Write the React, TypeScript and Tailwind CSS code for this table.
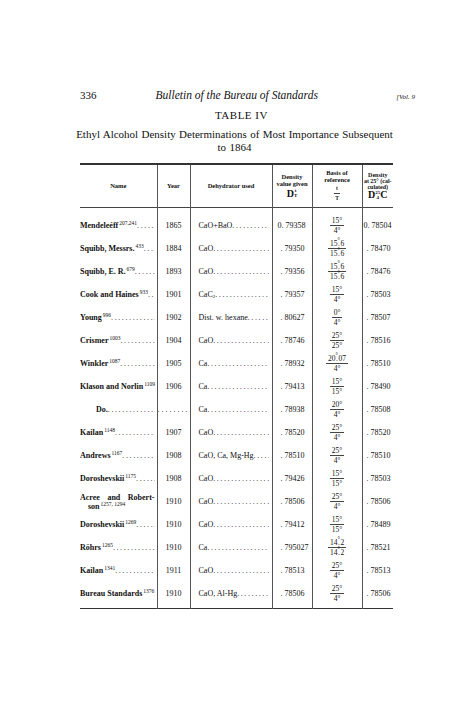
import React from "react";

type Row = {
  name: React.ReactNode;
  year: string;
  dehy: React.ReactNode;
  given: string;
  basis: [React.ReactNode, React.ReactNode];
  d25: string;
};

const DOTS = ". . . . . . . . . . . . . . . . . . . . . . . . . . . . . . . . . . . . . . . .";

const Sup = ({ children }: { children: React.ReactNode }) => (
  <sup className="ml-[1px] text-[5.5px] font-normal">{children}</sup>
);

// 15°.6 style: degree sign sitting over the decimal point
const Dd = ({ a, b }: { a: string; b: string }) => (
  <span>
    {a}
    <span className="relative inline-block w-[3px]">
      <span className="absolute -top-[3px] left-0 text-[6px]">°</span>.
    </span>
    {b}
  </span>
);

const Leader = ({ children, bold }: { children: React.ReactNode; bold?: boolean }) => (
  <span className={`flex w-full items-baseline ${bold ? "font-bold" : ""}`}>
    <span className="shrink-0 whitespace-nowrap">{children}</span>
    <span className="flex-1 overflow-hidden whitespace-nowrap font-normal tracking-[-0.2px]">{DOTS}</span>
  </span>
);

const Frac = ({ top, bottom }: { top: React.ReactNode; bottom: React.ReactNode }) => (
  <span className="inline-flex flex-col items-center leading-[9px]">
    <span className="border-b border-[#444] px-[2px]">{top}</span>
    <span className="px-[2px]">{bottom}</span>
  </span>
);

const rows: Row[] = [
  { name: <>Mendeleéff<Sup>207,241</Sup></>, year: "1865", dehy: "CaO+BaO", given: "0. 79358", basis: ["15°", "4°"], d25: "0. 78504" },
  { name: <>Squibb, Messrs.<Sup>433</Sup></>, year: "1884", dehy: "CaO", given: ". 79350", basis: [<Dd a="15" b="6" />, <Dd a="15" b="6" />], d25: ". 78470" },
  { name: <>Squibb, E. R.<Sup>679</Sup></>, year: "1893", dehy: "CaO", given: ". 79356", basis: [<Dd a="15" b="6" />, <Dd a="15" b="6" />], d25: ". 78476" },
  { name: <>Cook and Haines<Sup>933</Sup></>, year: "1901", dehy: <>CaC<sub className="text-[5px]">2</sub></>, given: ". 79357", basis: ["15°", "4°"], d25: ". 78503" },
  { name: <>Young<Sup>996</Sup></>, year: "1902", dehy: "Dist. w. hexane", given: ". 80627", basis: ["0°", "4°"], d25: ". 78507" },
  { name: <>Crismer<Sup>1003</Sup></>, year: "1904", dehy: "CaO", given: ". 78746", basis: ["25°", "25°"], d25: ". 78516" },
  { name: <>Winkler<Sup>1087</Sup></>, year: "1905", dehy: "Ca", given: ". 78932", basis: [<Dd a="20" b="07" />, "4°"], d25: ". 78510" },
  { name: <>Klason and Norlin<Sup>1109</Sup></>, year: "1906", dehy: "Ca", given: ". 79413", basis: ["15°", "15°"], d25: ". 78490" },
  { name: "DO", year: "", dehy: "Ca", given: ". 78938", basis: ["20°", "4°"], d25: ". 78508" },
  { name: <>Kailan<Sup>1148</Sup></>, year: "1907", dehy: "CaO", given: ". 78520", basis: ["25°", "4°"], d25: ". 78520" },
  { name: <>Andrews<Sup>1167</Sup></>, year: "1908", dehy: "CaO, Ca, Mg-Hg", given: ". 78510", basis: ["25°", "4°"], d25: ". 78510" },
  { name: <>Doroshevskii<Sup>1175</Sup></>, year: "1908", dehy: "CaO", given: ". 79426", basis: ["15°", "15°"], d25: ". 78503" },
  { name: "ACREE", year: "1910", dehy: "CaO", given: ". 78506", basis: ["25°", "4°"], d25: ". 78506" },
  { name: <>Doroshevskii<Sup>1269</Sup></>, year: "1910", dehy: "CaO", given: ". 79412", basis: ["15°", "15°"], d25: ". 78489" },
  { name: <>Röhrs<Sup>1265</Sup></>, year: "1910", dehy: "Ca", given: ". 795027", basis: [<Dd a="14" b="2" />, <Dd a="14" b="2" />], d25: ". 78521" },
  { name: <>Kailan<Sup>1341</Sup></>, year: "1911", dehy: "CaO", given: ". 78513", basis: ["25°", "4°"], d25: ". 78513" },
  { name: <>Bureau Standards<Sup>1376</Sup></>, year: "1910", dehy: "CaO, Al-Hg", given: ". 78506", basis: ["25°", "4°"], d25: ". 78506" },
];

const vline = "border-r border-[#555]";

export default function App() {
  return (
    <div
      className="h-[718px] w-[474px] overflow-hidden bg-white text-[#111]"
      style={{ fontFamily: '"Liberation Serif", "Times New Roman", serif' }}
    >
      <div className="pl-[80px] pr-[59px] pt-[89px]">
        {/* running head */}
        <div className="flex items-baseline text-[11px] leading-[13px]">
          <span>336</span>
          <span className="ml-[59px] text-[11.5px] italic">Bulletin of the Bureau of Standards</span>
          <span className="ml-auto text-[7px] italic">[Vol. 9</span>
        </div>

        <div className="mt-[5px] pr-[12px] text-center text-[11px] leading-[13px] tracking-[0.5px]">TABLE IV</div>

        <div className="-ml-[8px] mt-[6px] w-[325px] text-center text-[11px] leading-[13px] whitespace-nowrap [word-spacing:0.6px]">
          Ethyl Alcohol Density Determinations of Most Importance Subsequent
          <br />
          to 1864
        </div>

        <table className="mt-[9px] w-[313px] table-fixed border-collapse text-[8px] leading-[9px]">
          <colgroup>
            <col className="w-[77px]" />
            <col className="w-[33px]" />
            <col className="w-[82px]" />
            <col className="w-[40px]" />
            <col className="w-[50px]" />
            <col className="w-[31px]" />
          </colgroup>
          <thead>
            <tr className="h-[43px] border-t-2 border-b border-t-[#333] border-b-[#444] text-[6.5px] font-bold leading-[7px]">
              <th className={vline}>Name</th>
              <th className={vline}>Year</th>
              <th className={vline}>Dehydrator used</th>
              <th className={vline}>
                <div>Density</div>
                <div>value given</div>
                <div className="mt-[1px] flex items-center justify-center text-[10px]">
                  D
                  <span className="inline-flex flex-col text-[5px] leading-[5px]">
                    <span>t</span>
                    <span>T</span>
                  </span>
                </div>
              </th>
              <th className={vline}>
                <div>Basis of</div>
                <div>reference</div>
                <div className="mt-[1px] flex justify-center text-[5.5px] leading-[6px]">
                  <Frac top="t" bottom="T" />
                </div>
              </th>
              <th className="text-[6px] leading-[6px]">
                <div>Density</div>
                <div>at 25° (cal-</div>
                <div>culated)</div>
                <div className="flex items-center justify-center text-[10px] leading-[10px]">
                  D
                  <span className="inline-flex flex-col text-[5px] leading-[5px]">
                    <span>25</span>
                    <span>4</span>
                  </span>
                  C
                </div>
              </th>
            </tr>
          </thead>
          <tbody>
            <tr className="h-[7px]">
              <td className={vline} />
              <td className={vline} />
              <td className={vline} />
              <td className={vline} />
              <td className={vline} />
              <td />
            </tr>
            {rows.map((r, i) => (
              <tr key={i} className="h-[23px] align-middle">
                <td className={`${vline} pr-[2px]`}>
                  {r.name === "DO" ? (
                    <span className="block pl-[16px]">
                      <Leader bold>Do.</Leader>
                    </span>
                  ) : r.name === "ACREE" ? (
                    <div className="font-bold">
                      <div className="flex justify-between">
                        <span>Acree</span>
                        <span>and</span>
                        <span>Robert-</span>
                      </div>
                      <div className="pl-[8px]">
                        son<Sup>1257, 1294</Sup>
                      </div>
                    </div>
                  ) : (
                    <Leader bold>{r.name}</Leader>
                  )}
                </td>
                <td className={`${vline} text-center`}>
                  {r.name === "DO" ? (
                    <span className="block overflow-hidden whitespace-nowrap">{DOTS}</span>
                  ) : (
                    r.year
                  )}
                </td>
                <td className={`${vline} pl-[8px] pr-[3px]`}>
                  <Leader>{r.dehy}</Leader>
                </td>
                <td className={`${vline} whitespace-nowrap ${r.given.startsWith("0") ? "pl-[5px]" : "pl-[8px]"}`}>
                  {r.given}
                </td>
                <td className={`${vline} text-center text-[7.5px]`}>
                  <Frac top={r.basis[0]} bottom={r.basis[1]} />
                </td>
                <td className={`whitespace-nowrap ${r.d25.startsWith("0") ? "pl-[1px]" : "pl-[4px]"}`}>{r.d25}</td>
              </tr>
            ))}
            <tr className="h-[3px] border-b border-[#333]">
              <td className={vline} />
              <td className={vline} />
              <td className={vline} />
              <td className={vline} />
              <td className={vline} />
              <td />
            </tr>
          </tbody>
        </table>
      </div>
    </div>
  );
}
